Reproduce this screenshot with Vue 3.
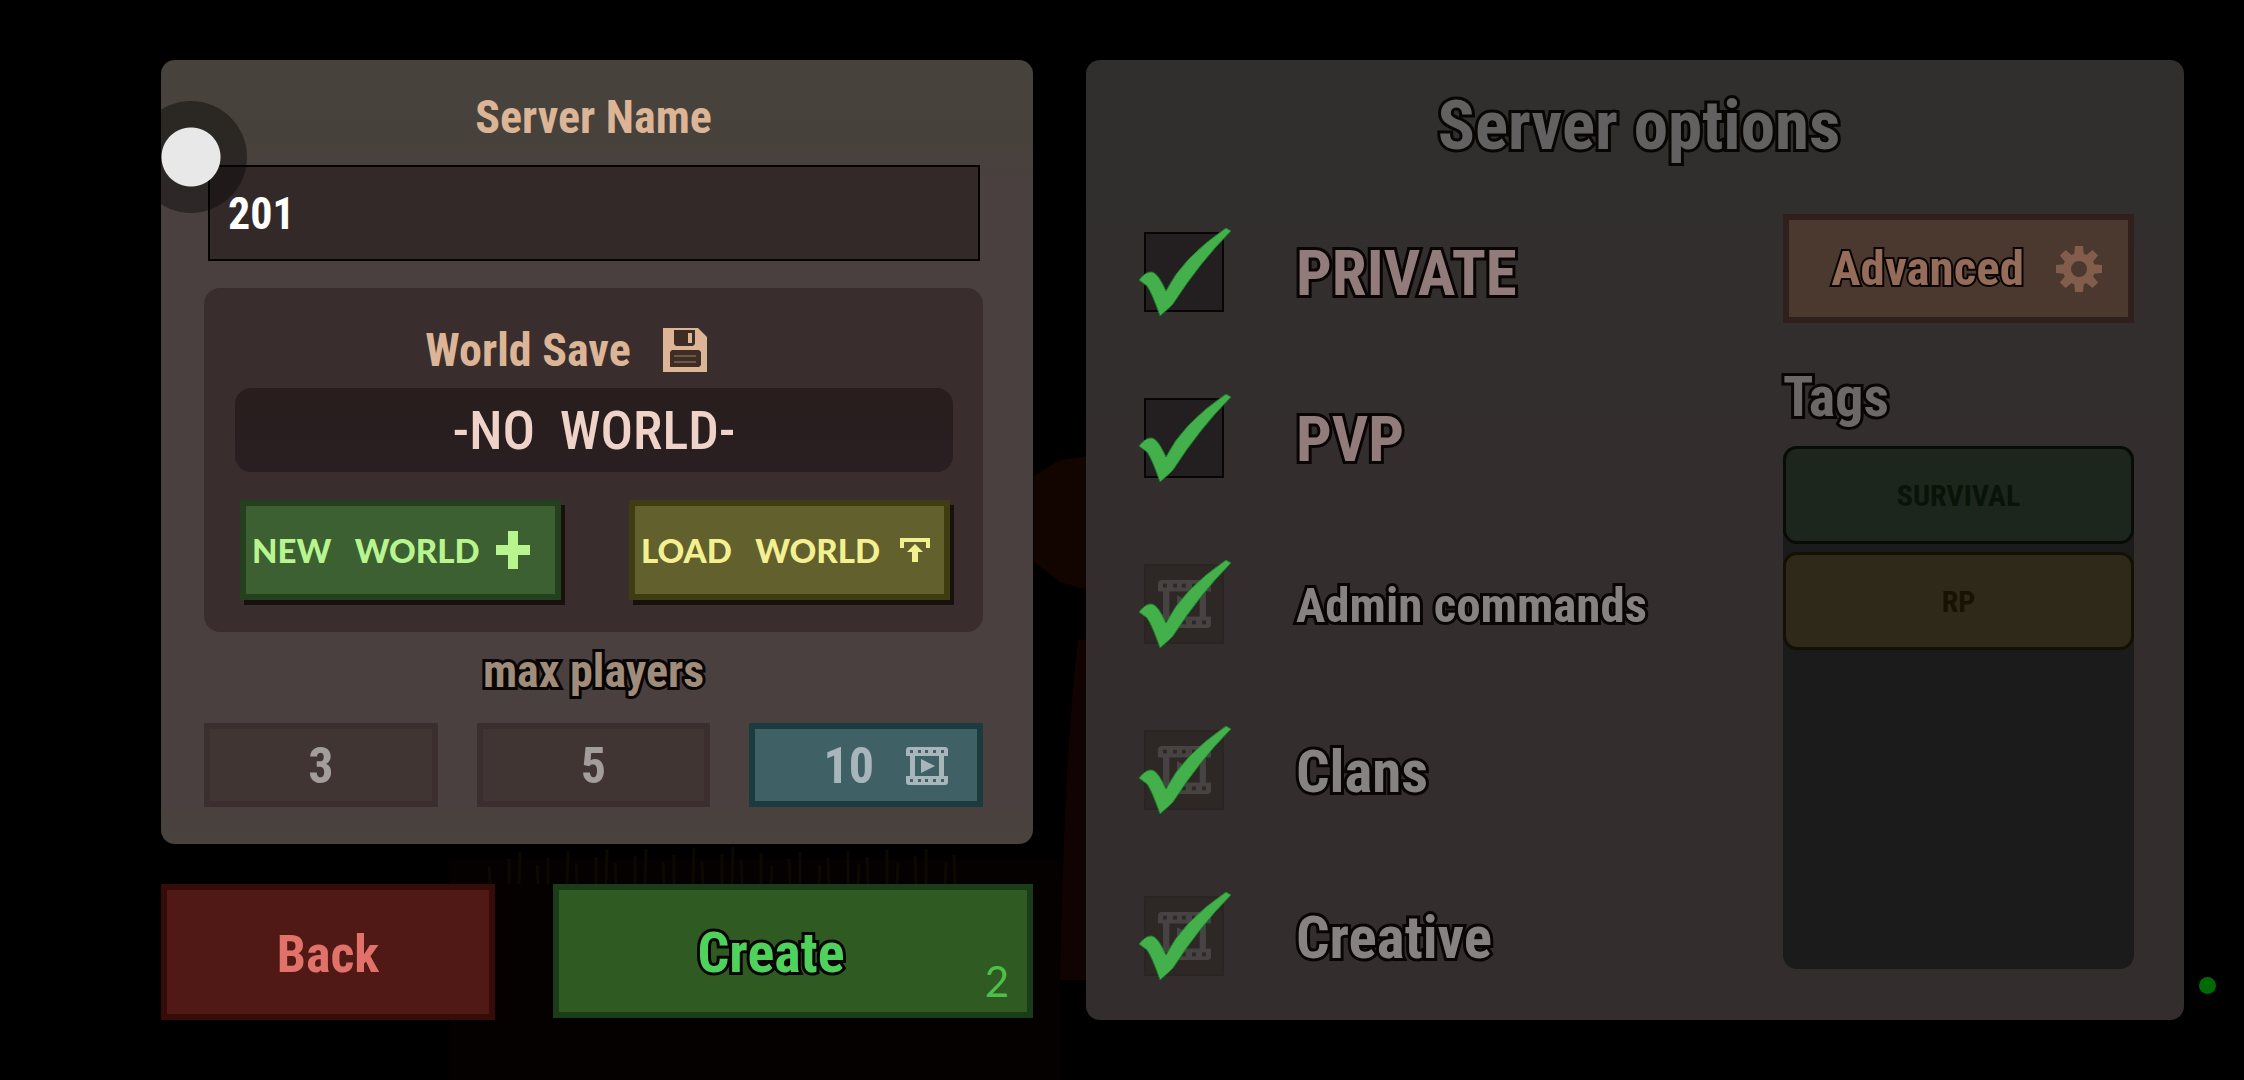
<template>
  <main class="page">
    <!-- dim scenery behind the panels -->
    <svg class="scenery" viewBox="0 0 2244 1080" preserveAspectRatio="none" aria-hidden="true">
      <path d="M1034 476 L1060 460 L1088 456 V590 L1060 582 L1034 562 Z" fill="#120500" />
      <path d="M1078 640 Q1064 760 1060 980 H1090 V640 Z" fill="#100301" />
      <path d="M450 1080 V860 H1060 V1080 Z" fill="#040100" />
      <path v-for="(x, i) in grass" :key="x" :d="`M${x} 884 l${i % 3 - 1} -${18 + (i * 7) % 20}`" stroke="#0d0802" stroke-width="3" />
    </svg>

    <div class="left">
      <section class="panel setup">
        <label class="heading" for="server-name">Server Name</label>
        <input id="server-name" v-model="serverName" class="name-input" type="text">

        <div class="world">
          <h2 class="heading world-title">
            World Save
            <svg width="44" height="44" viewBox="0 0 44 44" aria-hidden="true">
              <path d="M0 0H35L44 9V44H0Z" fill="#dcb597" />
              <path d="M11 2H32V16L30 18H13L11 16Z M7 24L9 22H36L38 24V37L36 39H7Z" fill="#3d2d24" />
              <path d="M25 5H29V15H25Z" fill="#dcb597" />
              <path d="M11 28H33M11 34H33" stroke="#9c8270" stroke-width="1" />
            </svg>
          </h2>
          <p class="world-name">-NO&nbsp; WORLD-</p>
          <div class="world-buttons">
            <button class="world-btn new" type="button">
              NEW&nbsp;&nbsp; WORLD
              <svg class="plus" width="34" height="38" viewBox="0 0 34 38" aria-hidden="true">
                <path d="M12 0H22V14H34V24H22V38H12V24H0V14H12Z" fill="currentColor" />
              </svg>
            </button>
            <button class="world-btn load" type="button">
              LOAD&nbsp;&nbsp; WORLD
              <svg class="upload" width="30" height="24" viewBox="0 0 30 24" aria-hidden="true">
                <path d="M0 0H30V10H26V4H4V10H0Z M15 6L23 14H18V24H12V14H7Z" fill="currentColor" />
              </svg>
            </button>
          </div>
        </div>

        <h2 class="heading outlined players-title">max players</h2>
        <div class="players">
          <button
            v-for="n in playerCounts"
            :key="n"
            type="button"
            :class="['player-btn', { selected: n === maxPlayers }]"
            :aria-pressed="n === maxPlayers"
            @click="maxPlayers = n"
          >
            {{ n }}
            <svg v-if="n === 10" width="42" height="38" viewBox="0 0 42 38" aria-hidden="true">
              <path :d="filmPath" fill="currentColor" fill-rule="evenodd" />
            </svg>
          </button>
        </div>
      </section>

      <div class="actions">
        <button class="action back" type="button">Back</button>
        <button class="action create" type="button">
          <span class="outlined">Create</span>
          <span class="cost">2</span>
        </button>
      </div>
    </div>

    <section class="panel options">
      <h1 class="title outlined">Server options</h1>
      <div class="options-body">
        <ul class="checks">
          <li v-for="opt in options" :key="opt.id" class="check-row">
            <span class="check-box">
              <input :id="opt.id" v-model="opt.on" type="checkbox" :class="{ locked: opt.locked }">
              <svg v-if="opt.locked" class="film" viewBox="0 0 42 38" aria-hidden="true">
                <path :d="filmPath" fill="#474342" fill-rule="evenodd" />
              </svg>
              <svg v-if="opt.on" class="tick" viewBox="0 0 94 88" aria-hidden="true">
                <path d="M1 52 Q8 43 14 44 Q20 45 28 63 Q44 30 88 0 L93 3 Q62 34 35 76 L31 80 L22 88 Q14 65 9 58 Z" fill="#43b04b" stroke="#1f7a2a" stroke-width="1" />
              </svg>
            </span>
            <label :for="opt.id" :class="['outlined', opt.size, { rosy: !opt.locked }]">{{ opt.label }}</label>
          </li>
        </ul>

        <div class="side">
          <button class="advanced" type="button">
            <span class="outlined thin">Advanced</span>
            <svg width="46" height="46" viewBox="-23 -23 46 46" aria-hidden="true">
              <path v-for="a in 8" :key="a" d="M-5 -12L-4 -23H4L5 -12Z" :transform="`rotate(${a * 45})`" fill="#835d4c" />
              <circle r="12" fill="none" stroke="#835d4c" stroke-width="8" />
            </svg>
          </button>
          <h2 class="tags-title outlined">Tags</h2>
          <div class="tags">
            <button class="tag survival" type="button">SURVIVAL</button>
            <button class="tag rp" type="button">RP</button>
          </div>
        </div>
      </div>
    </section>

    <span class="touch"></span>
    <span class="status-dot"></span>
  </main>
</template>

<script setup>
import { ref, reactive } from 'vue'

const serverName = ref('201')
const maxPlayers = ref(10)
const playerCounts = [3, 5, 10]

const options = reactive([
  { id: 'private', label: 'PRIVATE', size: 'large', on: true, locked: false },
  { id: 'pvp', label: 'PVP', size: 'large', on: true, locked: false },
  { id: 'admin', label: 'Admin commands', size: 'small', on: true, locked: true },
  { id: 'clans', label: 'Clans', size: 'medium', on: true, locked: true },
  { id: 'creative', label: 'Creative', size: 'medium', on: true, locked: true }
])

// film strip: two perforated bars, two posts and a play triangle
const holes = [4, 12, 19, 27, 35].map(x => `M${x} 3h3v3h-3z M${x} 32h3v3h-3z`).join(' ')
const filmPath = `M3 0H39Q42 0 42 3V9H38V29H42V35Q42 38 39 38H3Q0 38 0 35V29H4V9H0V3Q0 0 3 0Z M9 9V29H33V9Z M15 12L29 19L15 26Z ${holes}`

const grass = Array.from({ length: 34 }, (el, i) => 490 + i * 14 + (i * 5) % 9)
</script>

<style>
body {
  margin: 0;
  background: #000;
}
</style>

<style scoped>
* {
  box-sizing: border-box;
}
.page {
  position: relative;
  min-height: 100vh;
  padding: 60px 60px 60px 161px;
  display: grid;
  grid-template-columns: minmax(0, 872fr) minmax(0, 1098fr);
  gap: 53px;
  overflow: hidden;
  font-family: "Roboto Condensed", "Liberation Sans Narrow", "Arial Narrow", "Liberation Sans", sans-serif;
  font-weight: 700;
}
.scenery {
  position: absolute;
  inset: 0;
  width: 100%;
  height: 100%;
}
h1,
h2,
p,
ul {
  margin: 0;
  padding: 0;
  font-weight: 700;
}
ul {
  list-style: none;
}
button,
input {
  font: inherit;
  margin: 0;
  border-radius: 0;
}
button {
  padding: 0;
  cursor: pointer;
}
.outlined {
  -webkit-text-stroke: 6px #090504;
  paint-order: stroke fill;
}
.thin {
  -webkit-text-stroke-width: 4px;
}
.panel {
  position: relative;
  border-radius: 14px;
}
.left {
  position: relative;
  display: flex;
  flex-direction: column;
  gap: 40px;
}

/* setup panel */
.setup {
  flex: 1;
  display: flex;
  flex-direction: column;
  padding: 29px 50px 37px 43px;
  background: linear-gradient(#47433c 0, #47413b 80px, #4a4040 130px, #4a4040 730px, #49423d 100%);
}
.heading {
  font-size: 46px;
  line-height: 56px;
  text-align: center;
  color: #dcb597;
}
.name-input {
  height: 96px;
  margin: 20px 3px 27px 4px;
  padding: 2px 18px 0;
  border: 2px solid #060202;
  background: #332929;
  color: #fff;
  font-size: 44px;
  outline: none;
}
.world {
  padding: 34px 30px 32px 31px;
  border-radius: 16px;
  background: #392e2d;
}
.world-title {
  display: flex;
  justify-content: center;
  align-items: center;
  gap: 32px;
  padding-right: 56px;
}
.world-name {
  margin: 10px 0 28px;
  padding-top: 2px;
  border-radius: 16px;
  background: linear-gradient(#291e1d, #291e21);
  color: #efd3c9;
  font-size: 54px;
  font-weight: 500;
  line-height: 82px;
  text-align: center;
}
.world-buttons {
  display: grid;
  grid-template-columns: 1fr 1fr;
  gap: 68px;
  padding: 0 3px 0 5px;
}
.world-btn {
  display: flex;
  align-items: center;
  height: 100px;
  padding-left: 6px;
  border: 6px solid;
  font-family: Lato, "Liberation Sans", sans-serif;
  font-size: 33px;
  font-weight: 900;
  white-space: nowrap;
  box-shadow: 4px 5px 0 #17110e;
}
.plus {
  margin-left: 16px;
}
.upload {
  margin-left: 20px;
}
.new {
  border-color: #24401f;
  background: #3c6032;
  color: #b9f58e;
}
.load {
  border-color: #3f3c12;
  background: #62602d;
  color: #f3f092;
}
.players-title {
  margin: 11px 0 24px;
  color: #a08c7b;
}
.players {
  display: grid;
  grid-template-columns: repeat(3, 1fr);
  gap: 39px;
}
.player-btn {
  display: flex;
  justify-content: center;
  align-items: center;
  height: 84px;
  padding-top: 2px;
  border: 6px solid #3a2e2e;
  background: #413534;
  color: #a39d9c;
  font-size: 50px;
}
.player-btn.selected {
  justify-content: flex-end;
  gap: 32px;
  padding-right: 29px;
  border-color: #1c3b3e;
  background: #3f6166;
  color: #a8b5ba;
}

.actions {
  display: grid;
  grid-template-columns: 334fr 480fr;
  gap: 58px;
}
.action {
  position: relative;
  height: 136px;
  padding-top: 4px;
  border: 6px solid;
}
.back {
  border-color: #350c07;
  background: #501915;
  color: #e0726a;
  font-size: 52px;
}
.create {
  height: 134px;
  padding-right: 44px;
  border-color: #1b3c18;
  background: #2f5a22;
  color: #4fd25c;
  font-size: 56px;
}
.cost {
  position: absolute;
  right: 18px;
  bottom: 6px;
  color: #4cc04a;
  font-family: Lato, sans-serif;
  font-size: 42px;
  font-weight: 400;
}

/* options panel */
.options {
  display: flex;
  flex-direction: column;
  padding: 26px 50px 43px 58px;
  background: linear-gradient(#302f2d, #332e2d 45%, #332e2d);
}
.title {
  margin-bottom: 48px;
  font-size: 69px;
  line-height: 80px;
  text-align: center;
  color: #626060;
}
.options-body {
  flex: 1;
  display: grid;
  grid-template-columns: minmax(0, 639fr) minmax(0, 351fr);
}
.checks {
  display: flex;
  flex-direction: column;
  gap: 86px;
  padding-top: 18px;
}
.check-row {
  display: flex;
  align-items: center;
  gap: 72px;
  height: 80px;
  color: #858281;
}
.check-row label {
  padding-top: 3px;
}
.check-box {
  position: relative;
  width: 80px;
  height: 80px;
}
.check-box input {
  appearance: none;
  display: block;
  width: 80px;
  height: 80px;
  border: 2px solid #070505;
  background: #231f20;
}
.check-box .locked {
  border-color: #2a2423;
  background: #2d2726;
}
.film {
  position: absolute;
  left: 14px;
  top: 16px;
  width: 53px;
  height: 48px;
  pointer-events: none;
}
.tick {
  position: absolute;
  left: -6px;
  top: -4px;
  width: 94px;
  height: 88px;
  pointer-events: none;
}
.large {
  font-size: 63px;
}
.medium {
  font-size: 59px;
}
.small {
  font-size: 49px;
}
.rosy {
  color: #927b7b;
}
.side {
  display: flex;
  flex-direction: column;
}
.advanced {
  display: flex;
  justify-content: flex-end;
  align-items: center;
  gap: 32px;
  height: 109px;
  padding-right: 26px;
  border: 6px solid #30201d;
  background: #4b382f;
  color: #946c59;
  font-size: 49px;
}
.tags-title {
  margin: 42px 0 17px;
  font-size: 56px;
  line-height: 64px;
  color: #6c6868;
}
.tags {
  flex: 1;
  display: flex;
  flex-direction: column;
  gap: 8px;
  margin-bottom: 8px;
  border-radius: 14px;
  background: #1c1b1c;
}
.tag {
  height: 98px;
  border: 3px solid;
  border-radius: 14px;
  font-size: 30px;
}
.survival {
  border-color: #070c07;
  background: #1d261c;
  color: #081408;
}
.rp {
  border-color: #141004;
  background: #2f291a;
  color: #181203;
}

/* on-screen touch indicator */
.touch {
  position: absolute;
  left: 135px;
  top: 101px;
  width: 112px;
  height: 112px;
  border-radius: 50%;
  background: radial-gradient(circle, #e9e8e8 29px, rgba(0, 0, 0, 0.4) 30px);
  pointer-events: none;
}
.status-dot {
  position: absolute;
  right: 28px;
  bottom: 86px;
  width: 17px;
  height: 17px;
  border-radius: 50%;
  background: #006a04;
}
</style>
